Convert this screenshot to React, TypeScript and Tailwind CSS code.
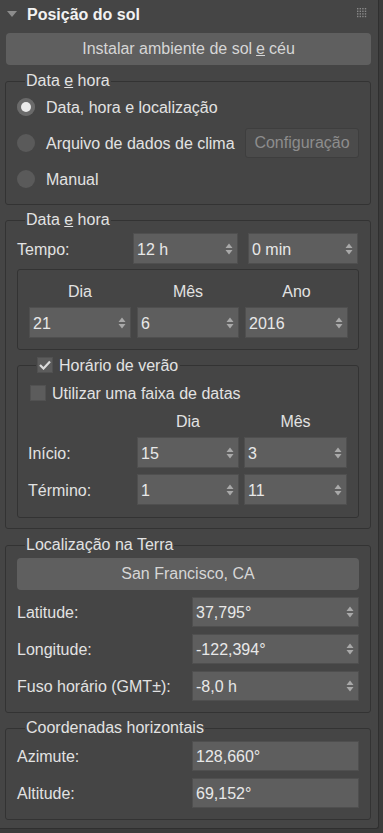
import React from "react";

const txt = "text-[16px] leading-[18px] text-[#e2e2e2]";

function Arrows() {
  return (
    <svg width="8" height="14" viewBox="0 0 8 14" className="shrink-0">
      <path d="M0.5 6 L4 1.5 L7.5 6Z M0.5 8 L7.5 8 L4 12.5Z" fill="#a9a9a9" />
    </svg>
  );
}

function Spinner({ value, w, h = 30, arrows = true }: { value: string; w: number; h?: number; arrows?: boolean }) {
  return (
    <div
      className={`flex items-center justify-between bg-[#5e5e5e] border border-[#4f4f4f] pl-[3px] pr-[4px] ${txt} text-[#e8e8e8] shrink-0`}
      style={{ width: w, height: h }}
    >
      <span className="pt-[2px]">{value}</span>
      {arrows && <Arrows />}
    </div>
  );
}

function Radio({ checked }: { checked?: boolean }) {
  return (
    <div className="w-[18px] h-[18px] rounded-full bg-[#5a5a5a] flex items-center justify-center shrink-0">
      {checked && (
        <div className="w-[18px] h-[18px] rounded-full bg-[#6a6a6a] flex items-center justify-center">
          <div className="w-[10px] h-[10px] rounded-full bg-[#ebebeb]" />
        </div>
      )}
    </div>
  );
}

function Checkbox({ checked }: { checked?: boolean }) {
  return (
    <div className="w-[16px] h-[16px] bg-[#5c5c5c] border border-[#515151] flex items-center justify-center shrink-0">
      {checked && (
        <svg width="12" height="10" viewBox="0 0 12 10">
          <path d="M1 5 L4.5 8.5 L11 1.5" stroke="#dcdcdc" strokeWidth="2.2" fill="none" />
        </svg>
      )}
    </div>
  );
}

function Legend({ children }: { children: React.ReactNode }) {
  return <legend className={`ml-[8px] px-[1px] h-[18px] ${txt}`}>{children}</legend>;
}

export default function App() {
  return (
    <div className="w-[383px] h-[833px] bg-[#3b3b3b] font-['Liberation_Sans',Arial,sans-serif] flex items-start">
      <div className="w-[379px] h-[829px] bg-[#454545] border-r border-b border-[#2f2f2f] rounded-br-[3px] flex flex-col">
        {/* Header */}
        <div className="h-[33px] flex items-center relative">
          <svg width="10" height="7" viewBox="0 0 10 7" className="ml-[7px] mt-[-4px]">
            <path d="M0 0 L10 0 L5 6Z" fill="#8c8c8c" />
          </svg>
          <span className="ml-[10px] mt-[-4px] text-[16px] leading-[20px] font-bold text-[#f2f2f2]">Posição do sol</span>
          <svg width="10" height="10" viewBox="0 0 10 10" className="ml-auto mr-[11px] mt-[-7px]">
            {[0, 1, 2, 3].map((r) =>
              [0, 1, 2, 3].map((c) => (
                <rect key={`${r}-${c}`} x={c * 2.6} y={r * 2.6} width="1.4" height="1.4" fill="#8a8a8a" />
              ))
            )}
          </svg>
        </div>
        <div className="ml-[6px] w-[365px] h-[32px] shrink-0 rounded-[4px] bg-[#5f5f5f] flex items-center justify-center text-[16px] text-[#d6d6d6]">
          Instalar ambiente de sol <span className="underline mx-[4px]">e</span> céu
        </div>

        {/* Fieldset 1 */}
        <fieldset className="ml-[5px] mt-[7px] w-[366px] border border-[#333333] rounded-[3px] pl-[11px] pr-[11px] pt-[2px] pb-[10px]">
          <Legend>
            Data <span className="underline">e</span> hora
          </Legend>
          <div className="flex flex-col gap-[6px]">
            <div className="h-[30px] flex items-center">
              <Radio checked />
              <span className={`ml-[11px] pt-[2px] ${txt}`}>Data, hora e localização</span>
            </div>
            <div className="h-[30px] flex items-center">
              <Radio />
              <span className={`ml-[11px] pt-[2px] ${txt}`}>Arquivo de dados de clima</span>
              <div className="ml-auto w-[114px] h-[30px] rounded-[3px] bg-[#4b4b4b] border border-[#3e3e3e] flex items-center justify-center text-[16px] text-[#8d8d8d]">
                Configuração
              </div>
            </div>
            <div className="h-[30px] flex items-center">
              <Radio />
              <span className={`ml-[11px] pt-[2px] ${txt}`}>Manual</span>
            </div>
          </div>
        </fieldset>

        {/* Fieldset 2 */}
        <fieldset className="ml-[5px] mt-[6px] w-[366px] border border-[#333333] rounded-[3px] pl-[11px] pr-[11px] pt-[4px] pb-[10px]">
          <Legend>
            Data <span className="underline">e</span> hora
          </Legend>
          <div className="flex items-center">
            <span className={`w-[116px] pt-[2px] ${txt}`}>Tempo:</span>
            <Spinner value="12 h" w={105} h={31} />
            <div className="w-[10px]" />
            <Spinner value="0 min" w={110} h={31} />
          </div>
          <div className="mt-[5px] w-[342px] border border-[#333333] rounded-[3px] pl-[11px] pt-[13px] pb-[11px]">
            <div className="flex gap-[6px]">
              {["Dia", "Mês", "Ano"].map((h, i) => (
                <div key={h} className={`text-center ${txt}`} style={{ width: [102, 102, 103][i] }}>
                  {h}
                </div>
              ))}
            </div>
            <div className="flex gap-[6px] mt-[6px]">
              <Spinner value="21" w={102} h={31} />
              <Spinner value="6" w={102} h={31} />
              <Spinner value="2016" w={103} h={31} />
            </div>
          </div>
          <fieldset className="mt-[6px] w-[342px] border border-[#333333] rounded-[3px] pl-[10px] pt-[10px] pb-[12px]">
            <legend className="ml-[8px] pl-[1px] pr-[2px] flex items-center h-[18px]">
              <Checkbox checked />
              <span className={`ml-[6px] pt-[2px] ${txt}`}>Horário de verão</span>
            </legend>
            <div className="h-[18px] flex items-center pl-[2px]">
              <Checkbox />
              <span className={`ml-[6px] pt-[2px] ${txt}`}>Utilizar uma faixa de datas</span>
            </div>
            <div className="flex mt-[11px]">
              <div className="w-[109px]" />
              <div className={`w-[102px] text-center ${txt}`}>Dia</div>
              <div className="w-[5px]" />
              <div className={`w-[103px] text-center ${txt}`}>Mês</div>
            </div>
            <div className="flex items-center mt-[6px]">
              <span className={`w-[109px] pt-[2px] ${txt}`}>Início:</span>
              <Spinner value="15" w={102} h={31} />
              <div className="w-[5px]" />
              <Spinner value="3" w={103} h={31} />
            </div>
            <div className="flex items-center mt-[6px]">
              <span className={`w-[109px] pt-[2px] ${txt}`}>Término:</span>
              <Spinner value="1" w={102} h={31} />
              <div className="w-[5px]" />
              <Spinner value="11" w={103} h={31} />
            </div>
          </fieldset>
        </fieldset>

        {/* Fieldset 3 */}
        <fieldset className="ml-[5px] mt-[7px] w-[366px] border border-[#333333] rounded-[3px] pl-[11px] pr-[11px] pt-[4px] pb-[11px]">
          <Legend>Localização na Terra</Legend>
          <div className="w-[342px] h-[32px] rounded-[4px] bg-[#5f5f5f] flex items-center justify-center text-[16px] text-[#d6d6d6]">
            San Francisco, CA
          </div>
          {[
            ["Latitude:", "37,795°"],
            ["Longitude:", "-122,394°"],
            ["Fuso horário (GMT±):", "-8,0 h"],
          ].map(([l, v]) => (
            <div key={l} className="flex items-center mt-[7px]">
              <span className={`w-[175px] pt-[2px] ${txt}`}>{l}</span>
              <Spinner value={v} w={167} h={30} />
            </div>
          ))}
        </fieldset>

        {/* Fieldset 4 */}
        <fieldset className="ml-[5px] mt-[6px] w-[366px] border border-[#333333] rounded-[3px] pl-[11px] pr-[11px] pt-[4px] pb-[11px]">
          <Legend>Coordenadas horizontais</Legend>
          {[
            ["Azimute:", "128,660°"],
            ["Altitude:", "69,152°"],
          ].map(([l, v], i) => (
            <div key={l} className={`flex items-center ${i ? "mt-[7px]" : ""}`}>
              <span className={`w-[175px] pt-[2px] ${txt}`}>{l}</span>
              <Spinner value={v} w={167} h={30} arrows={false} />
            </div>
          ))}
        </fieldset>
      </div>
    </div>
  );
}
